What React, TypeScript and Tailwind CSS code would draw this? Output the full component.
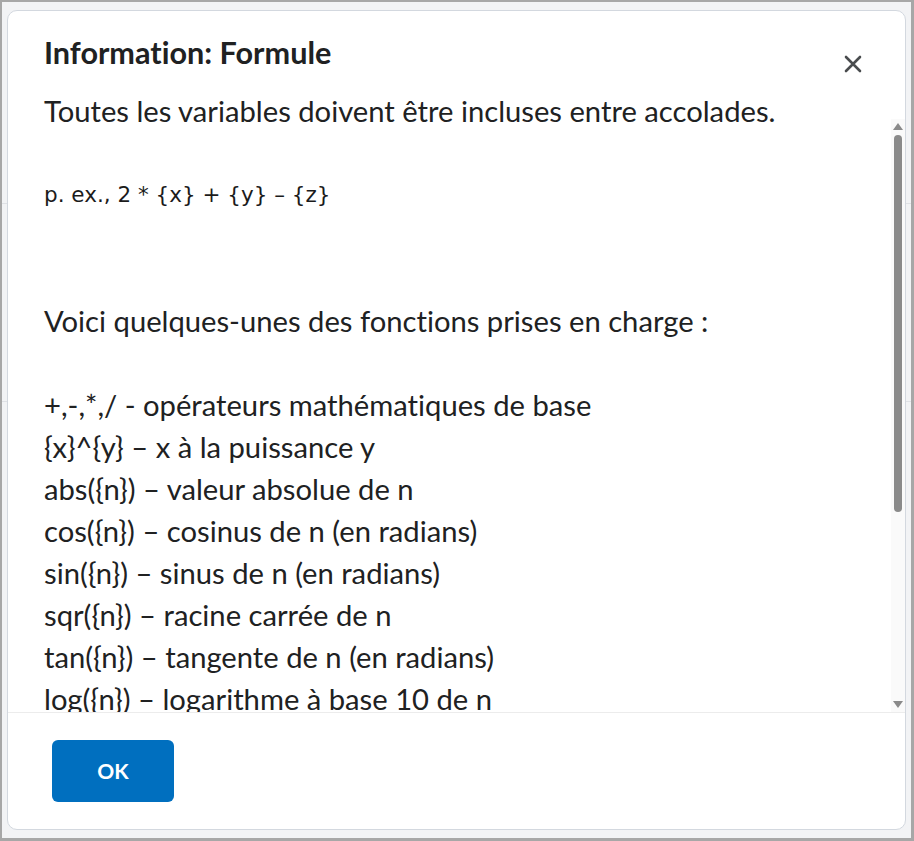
import React from "react";

const lines: string[] = [
  "+,-,*,/ - opérateurs mathématiques de base",
  "{x}^{y} – x à la puissance y",
  "abs({n}) – valeur absolue de n",
  "cos({n}) – cosinus de n (en radians)",
  "sin({n}) – sinus de n (en radians)",
  "sqr({n}) – racine carrée de n",
  "tan({n}) – tangente de n (en radians)",
  "log({n}) – logarithme à base 10 de n",
  "ln({n}) – logarithme naturel de n",
  "exp({n}) – e à la puissance n",
];

export default function App() {
  return (
    <div
      className="relative w-[914px] h-[841px] border-l-2 border-t-2 border-r-[3px] border-b-[3px] border-[#a7a7a7] bg-[#f2f3f5] pl-[5px] pr-[5px] pt-[8px] pb-[8px] [font-variant-ligatures:none]"
      style={{ fontFamily: "Lato, 'Noto Sans', sans-serif" }}
    >
      <div className="absolute left-0 right-0 top-[201px] h-px bg-[#dfe1e5]" />
      <div className="absolute left-0 right-0 top-[399px] h-px bg-[#dfe1e5]" />
      <div className="relative flex h-full flex-col overflow-hidden rounded-[10px] border border-[#d3d8df] bg-white">
        <div className="flex items-start justify-between pl-[36px] pr-[43px] pt-[25px]">
          <h1 className="text-[30.6px] leading-[34px] font-bold text-[#202122]">
            Information: Formule
          </h1>
          <button className="mt-[19px] flex h-[18px] w-[18px] items-center justify-center text-[#494c4e]">
            <svg width="18" height="18" viewBox="0 0 18 18" fill="none">
              <path d="M2 2 L16 16 M16 2 L2 16" stroke="#494c4e" strokeWidth="2.6" strokeLinecap="round" />
            </svg>
          </button>
        </div>
        <div className="relative mt-[17px] flex-1 overflow-hidden">
          <div className="pl-[36px] pr-[40px] text-[29.2px] leading-[42px] text-[#202122]">
            <div>Toutes les variables doivent être incluses entre accolades.</div>
            <div className="h-[42px]" />
            <div
              className="text-[21.5px] text-[#1b1b1b]"
              style={{ fontFamily: "'DejaVu Sans', Verdana, sans-serif" }}
            >
              p. ex., 2 * {"{x}"} + {"{y}"} – {"{z}"}
            </div>
            <div className="h-[84px]" />
            <div>Voici quelques-unes des fonctions prises en charge :</div>
            <div className="h-[42px]" />
            {lines.map((l) => (
              <div key={l}>{l}</div>
            ))}
          </div>
          <div className="absolute right-0 top-[29px] bottom-0 flex w-[14px] flex-col items-center bg-[#fafafa]">
            <svg className="mt-[4px]" width="10" height="7" viewBox="0 0 10 7">
              <path d="M5 0 L10 7 L0 7 Z" fill="#8a8a8a" />
            </svg>
            <div className="mt-[5px] h-[377px] w-[8px] rounded-full bg-[#8a8a8a]" />
            <div className="flex-1" />
            <svg className="mb-[4px]" width="10" height="7" viewBox="0 0 10 7">
              <path d="M0 0 L10 0 L5 7 Z" fill="#8a8a8a" />
            </svg>
          </div>
        </div>
        <div className="border-t border-[#ececec] pl-[44px] pt-[27px] pb-[27px]">
          <button className="flex h-[62px] w-[122px] items-center justify-center rounded-[6px] bg-[#006fbf] text-[21px] font-bold text-white">
            OK
          </button>
        </div>
      </div>
    </div>
  );
}
